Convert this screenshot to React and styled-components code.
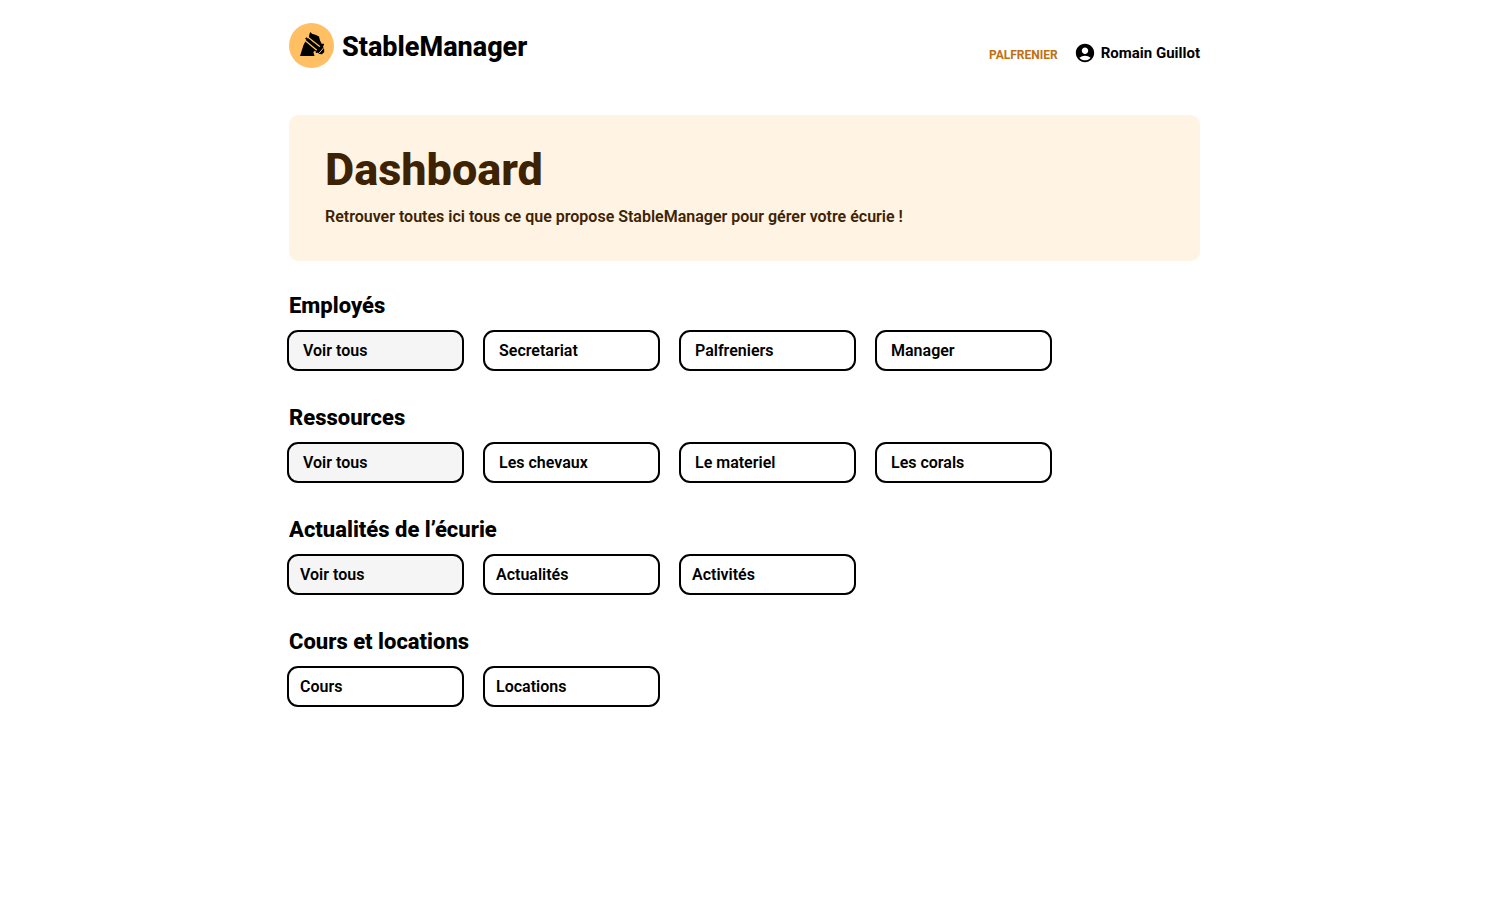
import React from 'react';
import styled, { createGlobalStyle } from 'styled-components';
import { MdAccountCircle } from 'react-icons/md';

const GlobalStyle = createGlobalStyle`
  *, *::before, *::after { box-sizing: border-box; }
  body {
    margin: 0;
    background: #fff;
    color: #000;
    font-family: Roboto, "Liberation Sans", sans-serif;
  }
`;

const Page = styled.div`
  width: 100%;
  max-width: 970px;
  margin: 0 auto;
  padding: 23px 35px 48px 24px;
`;

const Header = styled.header`
  display: flex;
  align-items: center;
  justify-content: space-between;
  flex-wrap: wrap;
  margin-bottom: 43px;
`;

const Brand = styled.a`
  display: flex;
  align-items: flex-start;
  gap: 8px;
  color: inherit;
  font-size: 27px;
  line-height: 49px;
  font-weight: 800;
  text-decoration: none;
`;

const Logo = styled.svg`
  width: 45px;
  height: 45px;
  flex: none;
`;

const Account = styled.div`
  display: flex;
  align-items: center;
  gap: 16px;
  padding-top: 11px;
`;

const Role = styled.span`
  color: #bf7013;
  font-size: 12px;
  line-height: 20px;
  font-weight: 700;
  padding-top: 4px;
`;

const User = styled.a`
  display: flex;
  align-items: center;
  gap: 5px;
  color: inherit;
  font-size: 15px;
  line-height: 20px;
  font-weight: 700;
  text-decoration: none;
`;

const Banner = styled.section`
  padding: 28px 36px 33px;
  border-radius: 9px;
  background: #fff3e3;
  color: #3d2304;
`;

const Title = styled.h1`
  margin: 0 0 9px;
  font-size: 45px;
  line-height: 54px;
  font-weight: 800;
`;

const Intro = styled.p`
  margin: 0;
  font-size: 16px;
  line-height: 22px;
  font-weight: 600;
`;

const Section = styled.section`
  margin: 32px 0 34px;
`;

const SectionTitle = styled.h2`
  margin: 0 0 11px;
  font-size: 22px;
  line-height: 26px;
  font-weight: 800;
`;

const Actions = styled.div`
  display: flex;
  flex-wrap: wrap;
  gap: 19px;
  margin: 0 -2px;
`;

const Action = styled.button`
  width: 177px;
  height: 41px;
  padding: 0 ${({ $inset }) => $inset}px;
  border: 2px solid #000;
  border-radius: 11px;
  background: ${({ $filled }) => ($filled ? '#f5f5f5' : '#fff')};
  color: #000;
  font: 600 16px/20px Roboto, "Liberation Sans", sans-serif;
  text-align: left;
  cursor: pointer;
`;

const sections = [
  { title: 'Employés', inset: 14, actions: ['Voir tous', 'Secretariat', 'Palfreniers', 'Manager'] },
  { title: 'Ressources', inset: 14, actions: ['Voir tous', 'Les chevaux', 'Le materiel', 'Les corals'] },
  { title: 'Actualités de l’écurie', inset: 11, actions: ['Voir tous', 'Actualités', 'Activités'] },
  { title: 'Cours et locations', inset: 11, actions: ['Cours', 'Locations'] },
];

export default function App() {
  return (
    <>
      <GlobalStyle />
      <Page>
        <Header>
          <Brand href="#">
            <Logo viewBox="0 0 45 45" aria-hidden="true">
              <circle cx="22.5" cy="22.5" r="22.5" fill="#ffbf62" />
              <path d="M11 33 L14.5 22 Q16 18 20 14 L20.3 11.5 L21.3 9 L23 10.7 L27 12 L30 13.5 L31 17.5 L35 25 L35.3 29 L33 31.3 L30.5 31 L26 27.7 L24.3 29 L25.5 33 Z" />
              <path d="M18 13.5 L32 24.6 M15.5 17 L29 28.3" fill="none" stroke="#ffbf62" strokeWidth="1.3" />
              <path d="M16.7 15 L31 26.6" fill="none" stroke="#000" strokeWidth="1.8" />
              <path d="M34 21.6 L27.7 28.9" fill="none" stroke="#000" strokeWidth="2.2" strokeLinecap="round" />
              <path d="M35.8 23.5 L30 30.3" fill="none" stroke="#ffbf62" strokeWidth="1" />
            </Logo>
            StableManager
          </Brand>
          <Account>
            <Role>PALFRENIER</Role>
            <User href="#">
              <MdAccountCircle size={22} aria-hidden="true" />
              Romain Guillot
            </User>
          </Account>
        </Header>
        <main>
          <Banner>
            <Title>Dashboard</Title>
            <Intro>Retrouver toutes ici tous ce que propose StableManager pour gérer votre écurie !</Intro>
          </Banner>
          {sections.map(({ title, inset, actions }) => (
            <Section key={title}>
              <SectionTitle>{title}</SectionTitle>
              <Actions>
                {actions.map((label) => (
                  <Action key={label} type="button" $inset={inset} $filled={label === 'Voir tous'}>
                    {label}
                  </Action>
                ))}
              </Actions>
            </Section>
          ))}
        </main>
      </Page>
    </>
  );
}
